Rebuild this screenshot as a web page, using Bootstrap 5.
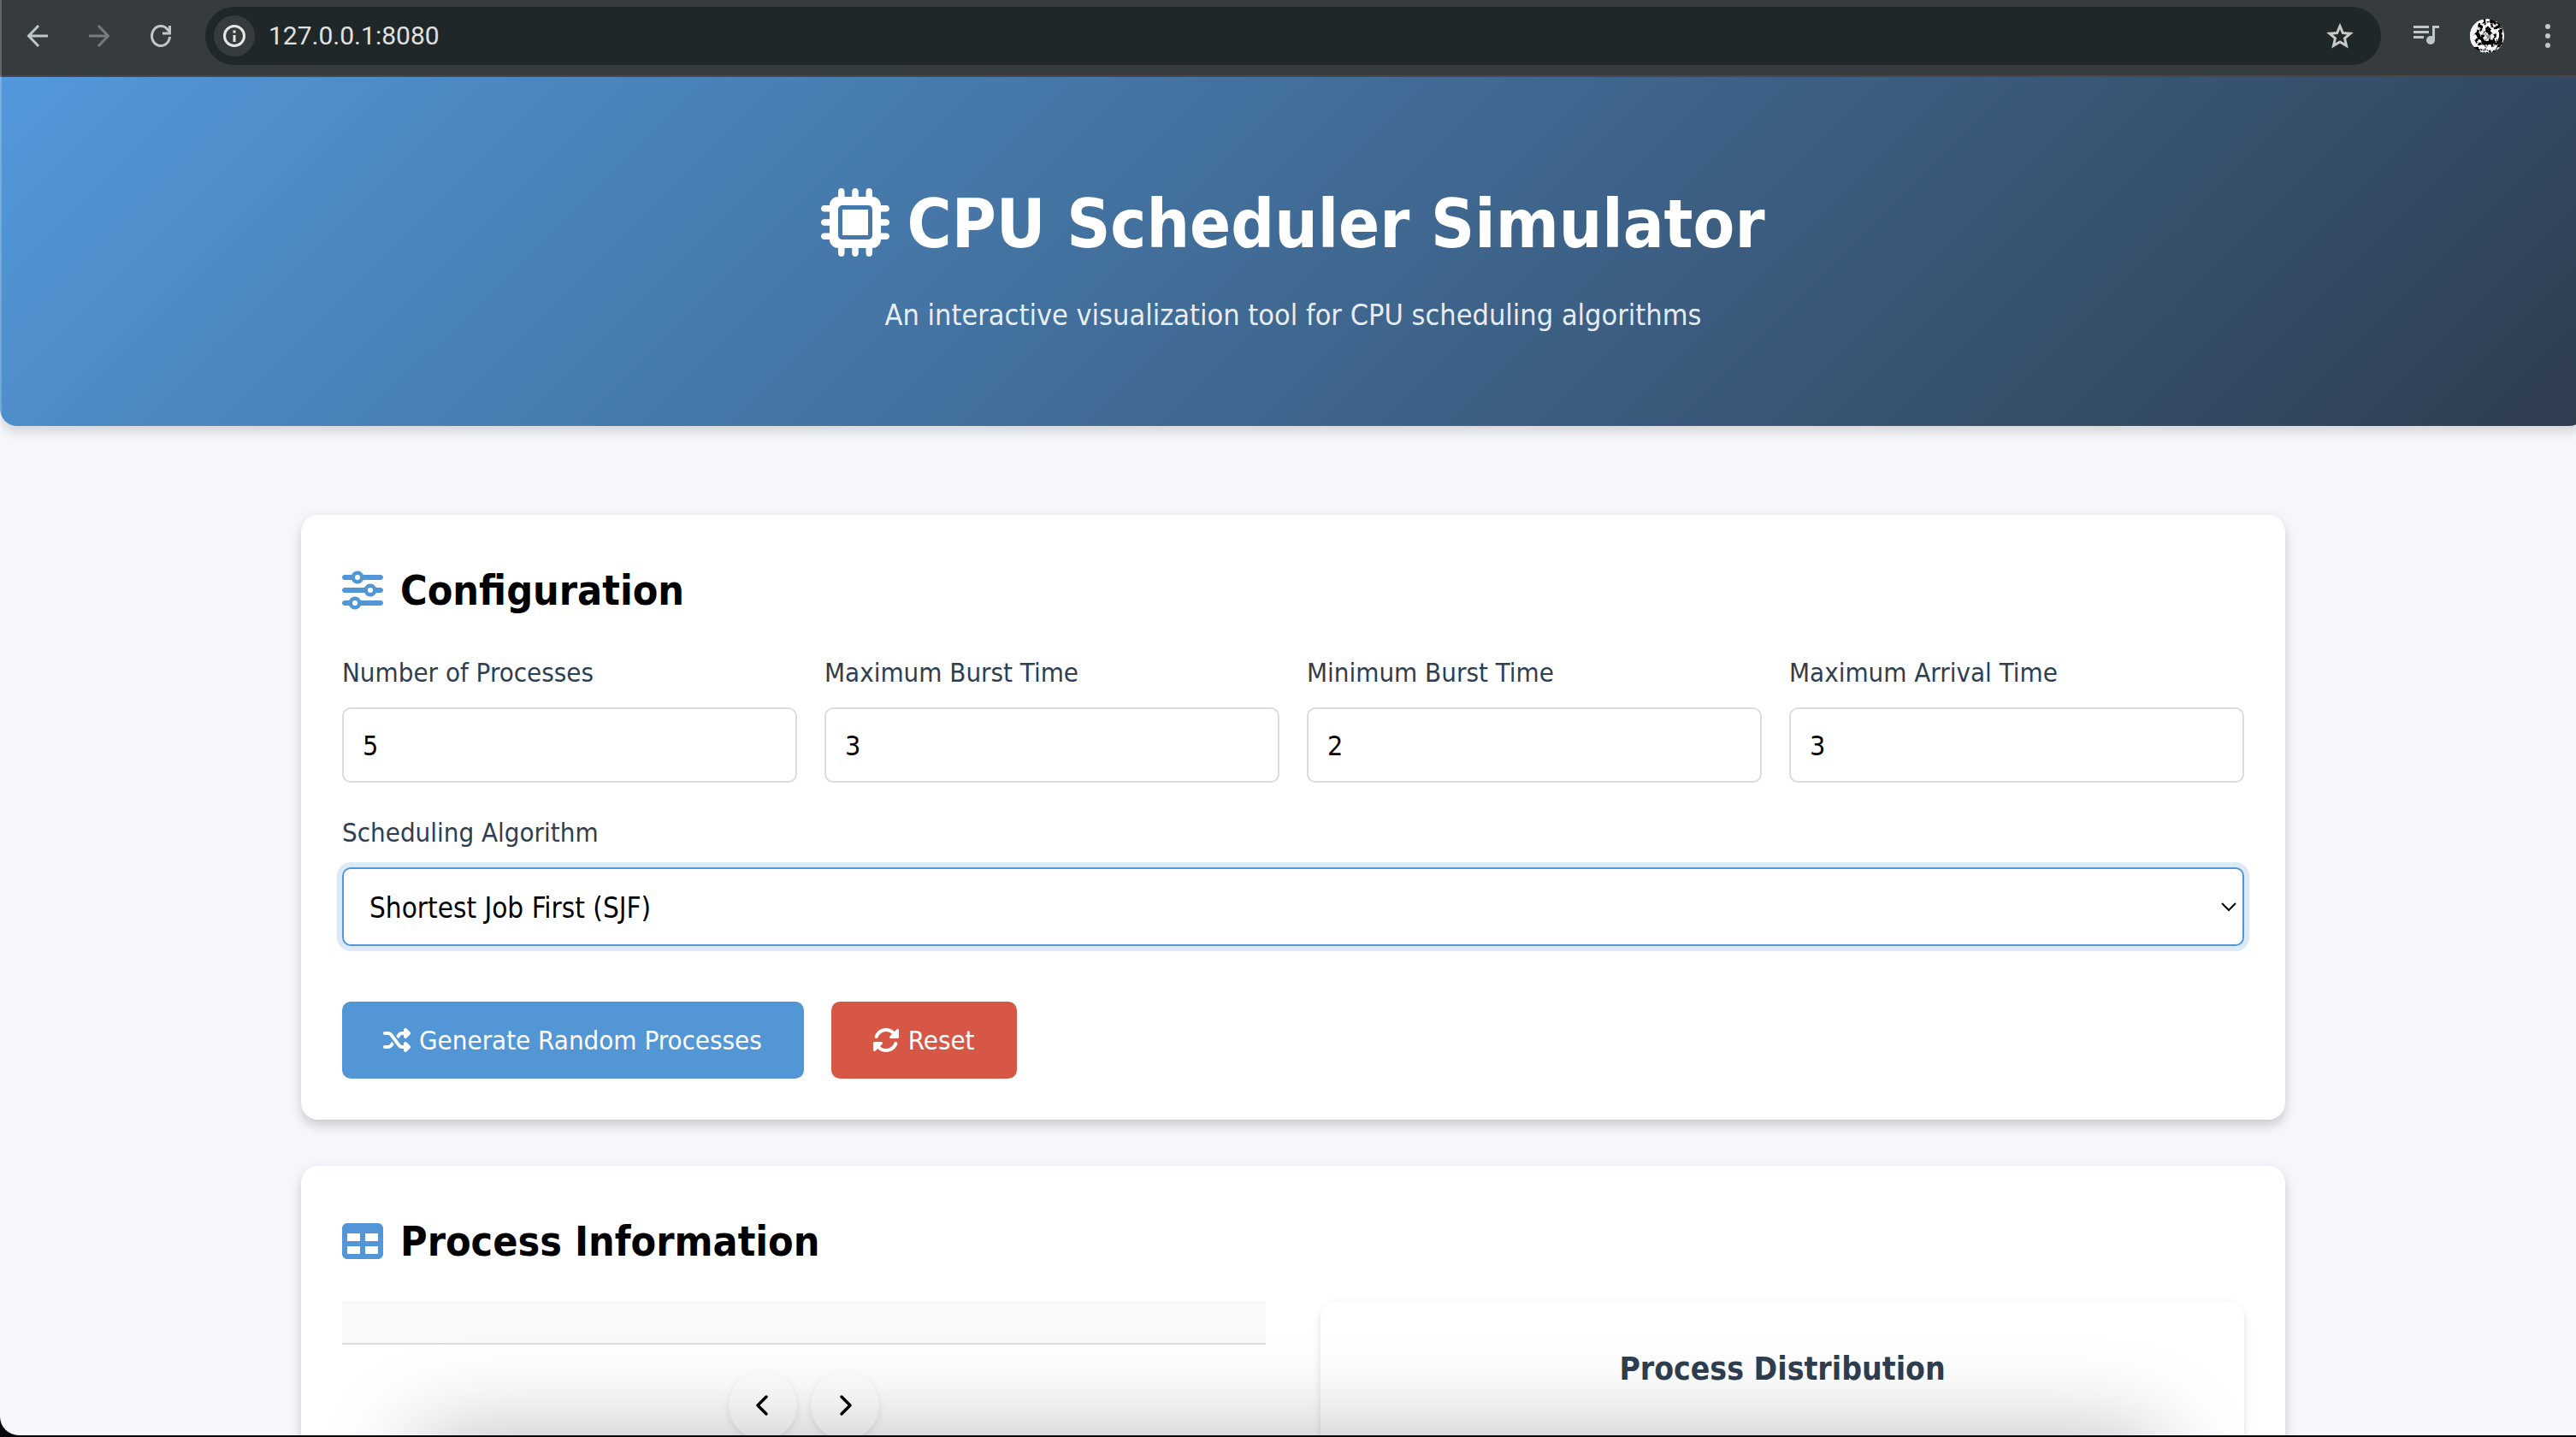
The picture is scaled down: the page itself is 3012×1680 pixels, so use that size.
<!DOCTYPE html>
<html lang="en">
<head>
<meta charset="utf-8">
<meta name="viewport" content="width=device-width, initial-scale=1">
<title>CPU Scheduler Simulator</title>
<link href="https://cdn.jsdelivr.net/npm/bootstrap@5.3.0/dist/css/bootstrap.min.css" rel="stylesheet">
<style>
  :root { --sim-blue: #5296d6; --sim-red: #d65745; --sim-ink: #2f3e50; --sim-line: #dcdcdc; }
  body { background: #05070c; font-family: "DejaVu Sans Condensed", "DejaVu Sans", sans-serif; color: #000; overflow: hidden; }
  .browser-window { height: calc(100vh - 2px); border-bottom-left-radius: 22px; background: #f5f7fb; }
  .browser-window::before { content: ""; position: absolute; inset: 0 auto 30px 0; width: 2px; background: rgba(255,255,255,.22); z-index: 5; }

  /* browser toolbar */
  .toolbar { height: 90px; background: #363c3e; border-bottom: 2px solid #4b4746; padding: 0 17px 4px 28px; color: #bfc7ca; }
  .tool-btn { width: 32px; height: 32px; padding: 0; border: 0; background: none; color: inherit; display: flex; align-items: center; justify-content: center; }
  .nav-tools { gap: 40px; }
  .omnibox { height: 68px; border-radius: 34px; background: #202728; padding: 0 32px 0 10px; margin-left: 36px; }
  .site-info { width: 48px; height: 48px; border-radius: 50%; background: #363c3e; color: #e6e6e6; }
  .address { border: 0; background: none; color: #e0e0e0; font: 30px/40px Roboto, "Liberation Sans", sans-serif; margin-left: 16px; padding: 0; outline: 0; }
  .side-tools { gap: 39px; margin-left: 37px; }

  /* page */
  .page-view { margin-right: -12px; }
  .hero { background: linear-gradient(135deg, #5298da 0%, #2f3d4f 100%); border-radius: 0 0 20px 20px; box-shadow: 0 8px 12px rgba(0,0,0,.12); padding: 122px 40px 104px; color: #fff; }
  .hero-title { font-size: 79px; line-height: 100px; gap: 20px; margin: 0 0 30px; font-weight: 700; }
  .hero-sub { font-size: 34px; line-height: 52px; color: rgba(255,255,255,.9); }
  .sim-body { max-width: 2400px; padding: 104px 40px 0; }
  .panel { background: #fff; border-radius: 20px; padding: 48px; margin-bottom: 54px; box-shadow: 0 4px 16px rgba(0,0,0,.09), 0 8px 12px rgba(0,0,0,.1); }
  .panel-title { font-size: 48px; line-height: 80px; font-weight: 700; gap: 20px; margin: 0 0 30px; }
  .panel-title svg { color: var(--sim-blue); }
  .sim-label { display: block; font-size: 31px; line-height: 52px; color: var(--sim-ink); margin: 0 0 15px; }
  .field-grid { --bs-gutter-x: 32px; }
  .algo-row { margin-top: 32px; }
  .sim-input, .sim-input:focus { font-size: 32px; line-height: 40px; height: 88px; padding: 4px 22px 2px; border: 2px solid var(--sim-line); border-radius: 10px; color: #000; background-color: #fff; }
  .sim-select, .sim-select:focus { font-size: 33px; line-height: 44px; height: 92px; padding: 4px 60px 0 30px; border: 2px solid var(--sim-blue); border-radius: 10px; box-shadow: 0 0 0 6px rgba(82,150,214,.2); color: #000;
    background-color: #fff; background-position: right 7px center; background-size: 18px 12px;
    background-image: url("data:image/svg+xml,%3csvg xmlns='http://www.w3.org/2000/svg' viewBox='0 0 18 12'%3e%3cpath fill='none' stroke='%23000' stroke-width='2' d='M1 2l8 8 8-8'/%3e%3c/svg%3e"); }
  .btn-row { gap: 32px; margin-top: 65px; }
  .sim-btn { height: 90px; padding: 0 47px 0 46px; border: 2px solid transparent; border-radius: 10px; font-size: 31px; line-height: 40px; color: #fff; gap: 10px; }
  .sim-btn-main { background: var(--sim-blue); }
  .sim-btn-reset { background: var(--sim-red); }
  .proc-table { --bs-table-bg: transparent; margin: 0; }
  .proc-table th { height: 50px; padding: 0; background: #f8f9fb; border-bottom: 2px solid var(--sim-line); }
  .split-grid { --bs-gutter-x: 64px; }
  .pager { gap: 16px; margin-top: 31px; }
  .round-btn { width: 80px; height: 80px; border: 0; border-radius: 50%; background: #fff; color: #000; box-shadow: 0 4px 10px rgba(0,0,0,.09); padding: 0; }
  .chart-box { border-radius: 20px; background: #fff; box-shadow: 0 4px 10px rgba(0,0,0,.13); padding: 48px; min-height: 600px; }
  .chart-title { font-size: 37px; line-height: 64px; font-weight: 700; color: var(--sim-ink); margin: 0; }
  .dock-shade { position: absolute; left: 16%; right: 16%; top: 100%; height: 200px; border-radius: 40px; box-shadow: 0 0 110px rgba(0,0,0,.27); pointer-events: none; }
</style>
<script src="https://cdn.jsdelivr.net/npm/bootstrap@5.3.0/dist/js/bootstrap.bundle.min.js"></script>
</head>
<body>
<div class="browser-window position-relative overflow-hidden">
  <nav class="toolbar d-flex align-items-center" aria-label="Browser">
    <div class="nav-tools d-flex align-items-center">
      <button class="tool-btn" type="button" aria-label="Back"><svg width="32" height="32" viewBox="0 0 32 32" fill="none" stroke="currentColor" stroke-width="3"><path d="M28 16H6M17 4L5.500 16 17 28"/></svg></button>
      <button class="tool-btn" type="button" aria-label="Forward"><svg width="32" height="32" viewBox="0 0 32 32" fill="none" stroke="#777c7d" stroke-width="3"><path d="M4 16h22M15 4l11.500 12L15 28"/></svg></button>
      <button class="tool-btn" type="button" aria-label="Reload"><svg width="32" height="32" viewBox="0 0 32 32" fill="none" stroke="currentColor" stroke-width="3"><path d="M26.500 17A10.500 11.500 0 1 1 24 8.500L27 12"/><path d="M26.500 4v9H18"/></svg></button>
    </div>
    <div class="omnibox d-flex align-items-center flex-grow-1">
      <button class="tool-btn site-info" type="button" aria-label="Site information"><svg width="28" height="28" viewBox="0 0 28 28" fill="none" stroke="currentColor" stroke-width="3"><circle cx="14" cy="14" r="11.500"/><path d="M14 13v8M14 7.500v3"/></svg></button>
      <input class="address flex-grow-1" type="text" value="127.0.0.1:8080" aria-label="Address">
      <button class="tool-btn" type="button" aria-label="Bookmark"><svg width="32" height="32" viewBox="0 0 32 32" fill="none" stroke="#c7c9c9" stroke-width="3"><path d="M16 4.500l3.400 8 8.700.700-6.600 5.700 2 8.500-7.500-4.500-7.500 4.500 2-8.500-6.600-5.700 8.700-.700z"/></svg></button>
    </div>
    <div class="side-tools d-flex align-items-center">
      <button class="tool-btn" type="button" aria-label="Media"><svg width="32" height="32" viewBox="0 0 32 32" fill="currentColor"><path d="M1 4h18v3H1zM1 10h18v3H1zM1 16h12v3H1zM23 4h8v3h-5v14h-3z"/><circle cx="21" cy="21" r="5"/></svg></button>
      <button class="tool-btn" type="button" aria-label="Profile"><svg class="flex-shrink-0" width="40" height="40" viewBox="0 0 40 40">
        <defs>
          <filter id="grain" x="0" y="0" width="1" height="1"><feTurbulence type="fractalNoise" baseFrequency=".16" numOctaves="3" seed="7"/><feColorMatrix values="9 0 0 0 -4.200  9 0 0 0 -4.200  9 0 0 0 -4.200  0 0 0 0 1"/></filter>
          <clipPath id="face"><circle cx="20" cy="20" r="20"/></clipPath>
        </defs>
        <g clip-path="url(#face)"><rect width="40" height="40" filter="url(#grain)"/><path fill="#f4f4f4" d="M0 0h13L9 8l-1 7-4 4 2 8 2 6H0z"/><path fill="#161616" d="M34 13l3 3 1 10-4 6-2-5 2-6z"/><path fill="#f4f4f4" d="M38 10h2v20h-2z"/><circle cx="22" cy="21" r="2.500" fill="#888"/></g>
      </svg></button>
      <button class="tool-btn" type="button" aria-label="Menu"><svg width="32" height="32" viewBox="0 0 32 32" fill="currentColor"><circle cx="16" cy="5" r="3"/><circle cx="16" cy="16" r="3"/><circle cx="16" cy="27" r="3"/></svg></button>
    </div>
  </nav>

  <div class="page-view">
    <header class="hero text-center">
      <h1 class="hero-title d-flex justify-content-center align-items-center">
        <svg class="mb-1" width="80" height="80" viewBox="0 0 512 512" fill="currentColor" aria-hidden="true"><path d="M176 24c0-13.300-10.700-24-24-24s-24 10.700-24 24V64c-35.300 0-64 28.700-64 64H24c-13.300 0-24 10.700-24 24s10.700 24 24 24H64v56H24c-13.300 0-24 10.700-24 24s10.700 24 24 24H64v56H24c-13.300 0-24 10.700-24 24s10.700 24 24 24H64c0 35.300 28.700 64 64 64v40c0 13.300 10.700 24 24 24s24-10.700 24-24V448h56v40c0 13.300 10.700 24 24 24s24-10.700 24-24V448h56v40c0 13.300 10.700 24 24 24s24-10.700 24-24V448c35.300 0 64-28.700 64-64h40c13.300 0 24-10.700 24-24s-10.700-24-24-24H448V280h40c13.300 0 24-10.700 24-24s-10.700-24-24-24H448V176h40c13.300 0 24-10.700 24-24s-10.700-24-24-24H448c0-35.300-28.700-64-64-64V24c0-13.300-10.700-24-24-24s-24 10.700-24 24V64H280V24c0-13.300-10.700-24-24-24s-24 10.700-24 24V64H176V24zM160 128H352c17.700 0 32 14.300 32 32V352c0 17.700-14.300 32-32 32H160c-17.700 0-32-14.300-32-32V160c0-17.700 14.300-32 32-32zm192 32H160V352H352V160z"/></svg>
        <span>CPU Scheduler Simulator</span>
      </h1>
      <p class="hero-sub m-0">An interactive visualization tool for CPU scheduling algorithms</p>
    </header>

    <main class="sim-body mx-auto">
      <section class="panel">
        <h2 class="panel-title d-flex align-items-center">
          <svg width="48" height="48" viewBox="0 0 512 512" fill="currentColor" aria-hidden="true"><path d="M0 416c0 17.700 14.300 32 32 32l54.700 0c12.300 28.300 40.500 48 73.300 48s61-19.700 73.300-48L480 448c17.700 0 32-14.300 32-32s-14.300-32-32-32l-246.700 0c-12.300-28.300-40.500-48-73.300-48s-61 19.700-73.300 48L32 384c-17.700 0-32 14.300-32 32zm128 0a32 32 0 1 1 64 0 32 32 0 1 1 -64 0zM320 256a32 32 0 1 1 64 0 32 32 0 1 1 -64 0zm32-80c-32.800 0-61 19.700-73.300 48L32 224c-17.700 0-32 14.300-32 32s14.300 32 32 32l246.700 0c12.300 28.300 40.500 48 73.300 48s61-19.700 73.300-48l54.700 0c17.700 0 32-14.300 32-32s-14.300-32-32-32l-54.700 0c-12.300-28.300-40.500-48-73.300-48zM192 128a32 32 0 1 1 0-64 32 32 0 1 1 0 64zm73.300-64C253 35.700 224.800 16 192 16s-61 19.700-73.300 48L32 64C14.300 64 0 78.300 0 96s14.300 32 32 32l86.700 0c12.300 28.300 40.500 48 73.300 48s61-19.700 73.300-48L480 128c17.700 0 32-14.300 32-32s-14.300-32-32-32L265.300 64z"/></svg>
          <span>Configuration</span>
        </h2>
        <form onsubmit="return false">
          <div class="row field-grid">
            <div class="col-3"><label class="sim-label" for="numProc">Number of Processes</label><input class="form-control sim-input" id="numProc" type="text" inputmode="numeric" value="5"></div>
            <div class="col-3"><label class="sim-label" for="maxBurst">Maximum Burst Time</label><input class="form-control sim-input" id="maxBurst" type="text" inputmode="numeric" value="3"></div>
            <div class="col-3"><label class="sim-label" for="minBurst">Minimum Burst Time</label><input class="form-control sim-input" id="minBurst" type="text" inputmode="numeric" value="2"></div>
            <div class="col-3"><label class="sim-label" for="maxArrival">Maximum Arrival Time</label><input class="form-control sim-input" id="maxArrival" type="text" inputmode="numeric" value="3"></div>
          </div>
          <div class="algo-row">
            <label class="sim-label" for="algorithm">Scheduling Algorithm</label>
            <select class="form-select sim-select" id="algorithm">
              <option selected>Shortest Job First (SJF)</option>
            </select>
          </div>
          <div class="btn-row d-flex">
            <button class="btn sim-btn sim-btn-main d-flex align-items-center" type="button">
              <svg width="32" height="32" viewBox="0 0 512 512" fill="currentColor" aria-hidden="true"><path d="M403.800 34.400c12-5 25.700-2.200 34.900 6.900l64 64c6 6 9.400 14.100 9.400 22.600s-3.400 16.600-9.400 22.600l-64 64c-9.200 9.200-22.900 11.900-34.900 6.900s-19.800-16.600-19.800-29.600V160H352c-10.100 0-19.600 4.700-25.600 12.800L284 229.300 244 176l31.200-41.600C293.300 110.200 321.800 96 352 96h32V64c0-12.900 7.800-24.600 19.800-29.600zM164 282.700L204 336l-31.200 41.600C154.700 401.800 126.200 416 96 416H32c-17.700 0-32-14.300-32-32s14.300-32 32-32H96c10.100 0 19.600-4.700 25.600-12.800L164 282.700zm274.600 188c-9.200 9.200-22.900 11.900-34.900 6.900s-19.800-16.600-19.800-29.600V416H352c-30.200 0-58.700-14.200-76.800-38.400L121.600 172.800c-6-8.100-15.500-12.800-25.600-12.800H32c-17.700 0-32-14.300-32-32s14.300-32 32-32H96c30.200 0 58.700 14.200 76.800 38.400L326.400 339.200c6 8.100 15.500 12.800 25.600 12.800h32V320c0-12.900 7.800-24.600 19.800-29.600s25.700-2.200 34.900 6.900l64 64c6 6 9.400 14.100 9.400 22.600s-3.400 16.600-9.400 22.600l-64 64z"/></svg>
              <span>Generate Random Processes</span>
            </button>
            <button class="btn sim-btn sim-btn-reset d-flex align-items-center" type="button">
              <svg width="32" height="32" viewBox="0 0 512 512" fill="currentColor" aria-hidden="true"><path d="M142.900 142.900c62.200-62.200 162.700-62.500 225.300-1L327 183c-6.900 6.900-8.900 17.200-5.200 26.200s12.500 14.800 22.200 14.800H472c13.300 0 24-10.700 24-24V72c0-9.700-5.800-18.500-14.800-22.200s-19.300-1.700-26.200 5.200L413.400 96.600c-87.600-86.500-228.700-86.200-315.800 1C73.200 122 55.600 150.700 44.800 181.400c-5.900 16.700 2.900 34.900 19.500 40.800s34.900-2.900 40.800-19.500c7.700-21.800 20.200-42.300 37.800-59.800zM16 312V440c0 9.700 5.800 18.500 14.800 22.200s19.300 1.700 26.200-5.200l41.600-41.600c87.600 86.500 228.700 86.200 315.800-1c24.400-24.400 42.100-53.100 52.900-83.700c5.900-16.700-2.900-34.900-19.500-40.800s-34.900 2.900-40.800 19.500c-7.700 21.800-20.200 42.300-37.800 59.800c-62.200 62.200-162.700 62.500-225.300 1L185 329c6.900-6.900 8.900-17.200 5.200-26.200s-12.500-14.800-22.200-14.800H40c-13.300 0-24 10.700-24 24z"/></svg>
              <span>Reset</span>
            </button>
          </div>
        </form>
      </section>

      <section class="panel">
        <h2 class="panel-title d-flex align-items-center">
          <svg width="48" height="48" viewBox="0 0 512 512" fill="currentColor" aria-hidden="true"><path d="M64 256V160H224v96H64zm0 64H224v96H64V320zm224 96V320H448v96H288zM448 256H288V160H448v96zM64 32C28.700 32 0 60.700 0 96V416c0 35.300 28.700 64 64 64H448c35.300 0 64-28.700 64-64V96c0-35.300-28.700-64-64-64H64z"/></svg>
          <span>Process Information</span>
        </h2>
        <div class="row split-grid">
          <div class="col-6">
            <table class="table proc-table"><thead><tr><th></th></tr></thead></table>
            <div class="pager d-flex justify-content-center">
              <button class="round-btn" type="button" aria-label="Previous"><svg width="24" height="28" viewBox="0 0 24 28" fill="none" stroke="currentColor" stroke-width="3.500" stroke-linecap="round" stroke-linejoin="round"><path d="M16 4L6 14l10 10"/></svg></button>
              <button class="round-btn" type="button" aria-label="Next"><svg width="24" height="28" viewBox="0 0 24 28" fill="none" stroke="currentColor" stroke-width="3.500" stroke-linecap="round" stroke-linejoin="round"><path d="M8 4l10 10L8 24"/></svg></button>
            </div>
          </div>
          <div class="col-6">
            <div class="chart-box text-center"><h3 class="chart-title">Process Distribution</h3></div>
          </div>
        </div>
      </section>
    </main>
  </div>
  <div class="dock-shade"></div>
</div>
</body>
</html>
